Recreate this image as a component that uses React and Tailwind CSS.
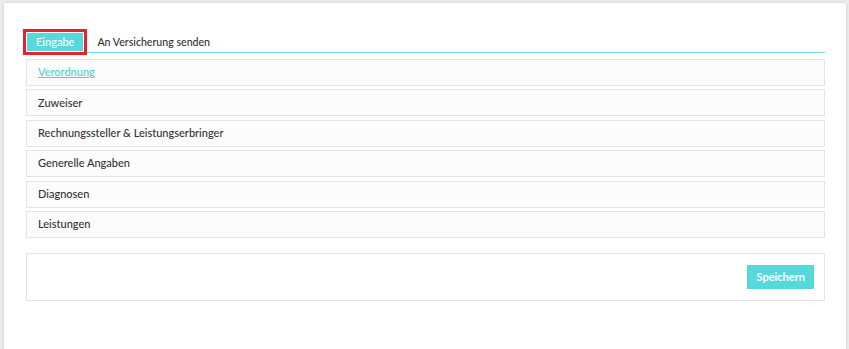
const rows = [
  "Verordnung",
  "Zuweiser",
  "Rechnungssteller & Leistungserbringer",
  "Generelle Angaben",
  "Diagnosen",
  "Leistungen",
];

export default function App() {
  return (
    <div className="h-[349px] w-[849px] bg-[#ececec] pl-[4px] pt-[3px] font-['Lato',sans-serif] text-[11px] text-[#333]">
      <div className="h-[346px] w-[842px] bg-white pl-[22px] pt-[26px] shadow-[0_0_3px_rgba(0,0,0,0.15)]">
        <div className="flex h-[26px] w-[802px] -ml-[3px] items-start">
          <div className="border-[3px] border-[#e8202f] p-px">
            <button className="block h-[18px] bg-[#56d8dc] px-[9px] text-[11px] font-medium leading-[18px] text-white">
              Eingabe
            </button>
          </div>
          <div className="flex flex-1 flex-col pt-[4px]">
            <span className="h-[18px] pl-[10px] text-[10.6px] font-medium leading-[18px]">
              An Versicherung senden
            </span>
            <div className="mt-[1px] h-px w-full bg-[#6adadd]" />
          </div>
        </div>
        <div className="mt-[4px] flex w-[799px] flex-col gap-[3.4px]">
          {rows.map((r, i) => (
            <div
              key={r}
              className="flex h-[27px] items-center border border-[#e4e4e4] bg-[#fcfcfc] px-[11px]"
            >
              {i === 0 ? (
                <a className="font-medium text-[#4fd0d6] underline">{r}</a>
              ) : (
                <span className="font-medium">{r}</span>
              )}
            </div>
          ))}
        </div>
        <div className="mt-[15px] flex h-[48px] w-[799px] items-center justify-end border border-[#e4e4e4] pr-[10px]">
          <button className="h-[24px] bg-[#56d8dc] px-[9px] text-[11px] font-bold text-white">
            Speichern
          </button>
        </div>
      </div>
    </div>
  );
}
